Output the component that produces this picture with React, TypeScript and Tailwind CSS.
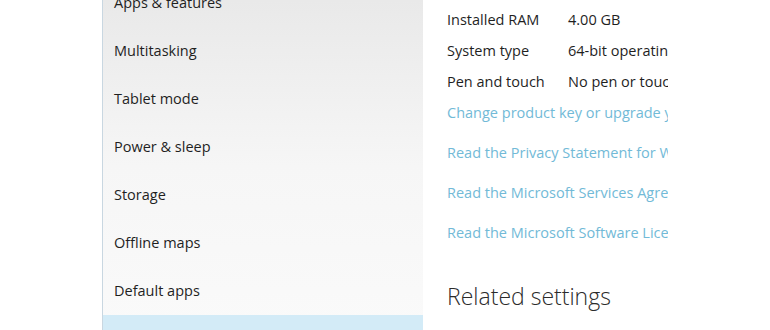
const navItems = [
  "Apps & features",
  "Multitasking",
  "Tablet mode",
  "Power & sleep",
  "Storage",
  "Offline maps",
  "Default apps",
  "About",
];

const specs = [
  { label: "Installed RAM", value: "4.00 GB" },
  { label: "System type", value: "64-bit operating system, x64-based processor" },
  { label: "Pen and touch", value: "No pen or touch input is available for this display" },
];

const links = [
  "Read the Privacy Statement for Windows and Microsoft services",
  "Read the Microsoft Services Agreement that applies to our services",
  "Read the Microsoft Software License Terms",
];

export default function App() {
  return (
    <div
      className="flex h-[330px] w-[770px] overflow-hidden bg-white text-[14.5px] text-[#1f1f1f]"
      style={{ fontFamily: '"Segoe UI", "Open Sans", "Noto Sans", sans-serif' }}
    >
      <div className="w-[102px] shrink-0 bg-white" />

      {/* sidebar */}
      <nav className="w-[321px] shrink-0 border-l border-[#c9d7e1] bg-gradient-to-b from-[#e9e9e9] via-[#f6f6f6] to-[#fafafa]">
        <ul className="-mt-[21px]">
          {navItems.map((item) => (
            <li
              key={item}
              className={`flex h-12 items-center pl-[11px] ${
                item === "About" ? "bg-[#d3ebf7]" : ""
              }`}
            >
              {item}
            </li>
          ))}
        </ul>
      </nav>

      {/* content */}
      <main className="w-[245px] shrink-0 overflow-hidden pl-6">
        <div className="whitespace-nowrap">
          <div className="pt-[4px]">
            {specs.map((s) => (
              <div key={s.label} className="flex h-[31px] items-center">
                <span className="w-[121px] shrink-0">{s.label}</span>
                <span>{s.value}</span>
              </div>
            ))}
          </div>
          <div className="flex h-[32px] items-center text-[#72bad7]">
            Change product key or upgrade your edition of Windows
          </div>
          <div className="mt-[4px]">
            {links.map((l) => (
              <div key={l} className="flex h-[40px] items-center text-[#72bad7]">
                {l}
              </div>
            ))}
          </div>
          <h2 className="mt-[32px] text-[23px] font-light leading-none text-[#2b2b2b]">
            Related settings
          </h2>
        </div>
      </main>

      <div className="flex-1 bg-white" />
    </div>
  );
}
